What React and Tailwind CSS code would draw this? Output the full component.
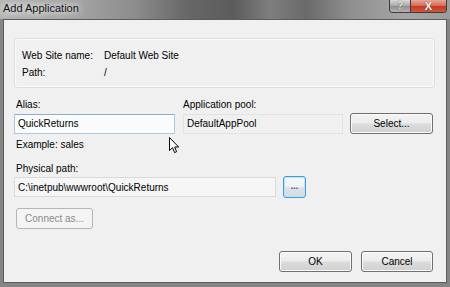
import React from 'react';

const btn =
  'flex items-center justify-center rounded-[3px] border border-[#707070] bg-[linear-gradient(to_bottom,#f4f4f4_0%,#ececec_48%,#dcdcdc_52%,#d0d0d0_100%)] shadow-[inset_0_0_0_1px_#fbfbfb] text-black';

export default function App() {
  return (
    <div className="relative w-[450px] h-[287px] flex flex-col bg-[#858585] font-['Liberation_Sans',Arial,sans-serif] text-[10px] text-black overflow-hidden">
      {/* Title bar */}
      <div className="h-[19px] flex items-start justify-between pl-[3px] pr-[3px] bg-[linear-gradient(to_right,#b4b4b4_0%,#a2a2a2_18%,#8c8c8c_30%,#666_42%,#5c5c5c_52%,#7e7e7e_60%,#6a6a6a_68%,#8f8f8f_78%,#a6a6a6_90%,#9c9c9c_100%)]">
        <span className="text-[11px] leading-[15px] mt-[1px] text-[#111] [text-shadow:0_0_6px_#fff,0_0_10px_#fff]">
          Add Application
        </span>
        <div className="flex h-[13px] border border-t-0 border-[#3c3c3c] rounded-b-[4px] overflow-hidden">
          <div className="w-[21px] flex items-center justify-center bg-[linear-gradient(to_bottom,#d8d8d8,#a6a6a6_50%,#8e8e8e_50%,#b2b2b2)] border-r border-[#3c3c3c] text-[10px] leading-none font-bold text-[#e8e8e8] [text-shadow:0_0_1px_#333]">
            ?
          </div>
          <div className="w-[35px] flex items-center justify-center bg-[linear-gradient(to_bottom,#e7a597,#d06a55_50%,#c0391f_50%,#d2583e)] text-[11px] leading-none font-bold text-white [text-shadow:0_0_1px_#600]">
            X
          </div>
        </div>
      </div>

      {/* Client area */}
      <div className="flex-1 mx-[3px] mb-[4px] border border-[#5c5c5c] bg-[#f0f0f0] pt-[18px] pl-[10px] pr-[11px] flex flex-col">
        <div className="h-[50px] rounded-[3px] border border-[#dcdfe2] shadow-[inset_0_0_0_1px_#fafafa] pl-[7px] pt-[8px]">
          <div className="flex leading-[17px]">
            <span className="w-[82px]">Web Site name:</span>
            <span>Default Web Site</span>
          </div>
          <div className="flex leading-[17px]">
            <span className="w-[82px]">Path:</span>
            <span>/</span>
          </div>
        </div>

        <div className="flex mt-[10px] leading-[14px]">
          <span className="w-[169px] pl-[2px]">Alias:</span>
          <span>Application pool:</span>
        </div>
        <div className="flex items-center mt-[1px]">
          <div className="w-[161px] h-[20px] border border-[#a9c8e4] border-t-[#87aed3] bg-[#fbfbfb] flex items-center pl-[3px]">
            QuickReturns
          </div>
          <div className="w-[160px] h-[20px] ml-[8px] border border-[#e2e2e2] bg-[#f0f0f0] flex items-center pl-[3px]">
            DefaultAppPool
          </div>
          <div className={`${btn} w-[83px] h-[21px] ml-[7px]`}>Select...</div>
        </div>

        <div className="mt-[4px] leading-[14px] pl-[2px]">Example: sales</div>
        <div className="mt-[10px] leading-[14px] pl-[2px]">Physical path:</div>
        <div className="flex items-center">
          <div className="w-[262px] h-[20px] border border-[#dadada] bg-[#f6f6f6] flex items-center pl-[3px]">
            C:\inetpub\wwwroot\QuickReturns
          </div>
          <div className="ml-[7px] w-[23px] h-[22px] rounded-[3px] border border-[#3c9be0] bg-[linear-gradient(to_bottom,#f4f8fb_0%,#eef2f5_48%,#dde3e8_52%,#d3dbe1_100%)] shadow-[inset_0_0_0_1px_#bfe3f8] flex items-center justify-center text-[9px] leading-none font-bold text-[#5a3b6a] pb-[2px]">
            ...
          </div>
        </div>

        <div className="mt-[10px] ml-[2px] w-[77px] h-[21px] rounded-[3px] border border-[#b3b6b9] bg-[#f4f4f4] flex items-center justify-center text-[#8a8a8a]">
          Connect as...
        </div>

        <div className="mt-auto mb-[10px] flex justify-end gap-[9px] pr-[2px]">
          <div className={`${btn} w-[73px] h-[21px]`}>OK</div>
          <div className={`${btn} w-[72px] h-[21px]`}>Cancel</div>
        </div>
      </div>

      {/* Mouse pointer */}
      <svg
        className="absolute left-[169px] top-[137px]"
        width="12"
        height="17"
        viewBox="0 0 12 17"
      >
        <path
          d="M0.5 0.5 L0.5 13.5 L3.5 10.7 L5.6 15.6 L7.6 14.7 L5.6 10 L9.6 10 Z"
          fill="#fff"
          stroke="#000"
          strokeWidth="1"
          strokeLinejoin="miter"
        />
      </svg>
    </div>
  );
}
